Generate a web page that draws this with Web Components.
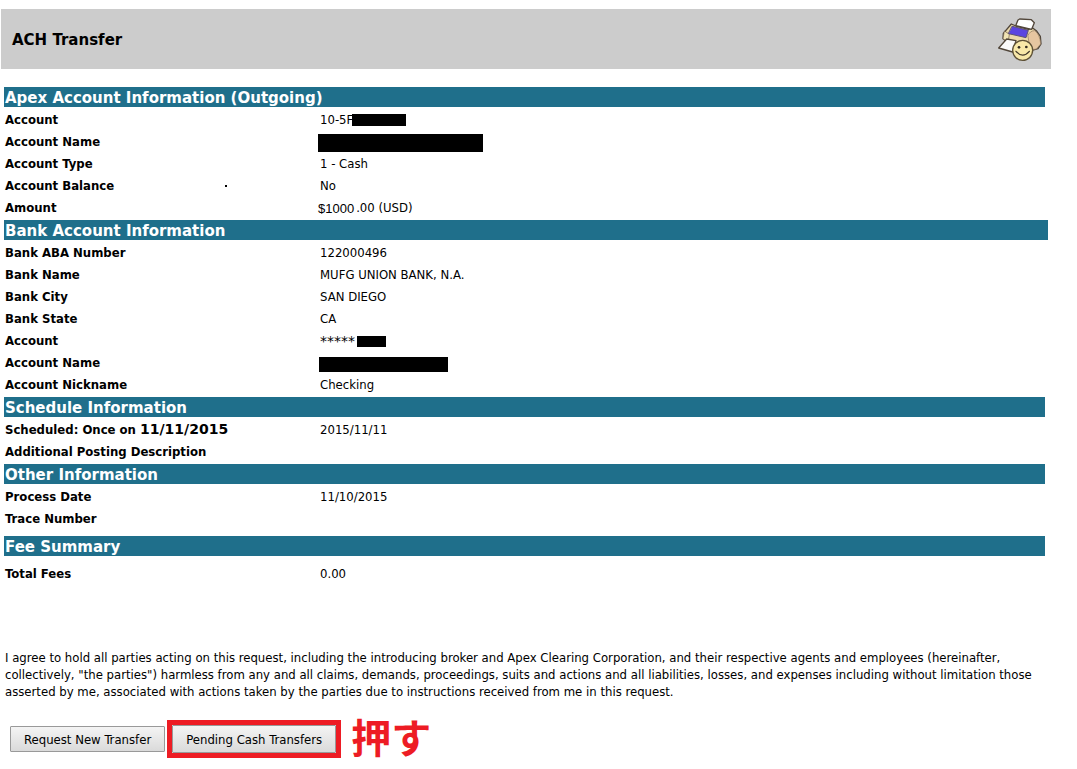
<!DOCTYPE html>
<html lang="en">
<head>
<meta charset="utf-8">
<title>ACH Transfer</title>
<style>
  body { margin: 0; background: #fff; color: #000; font: 13px/17px "DejaVu Sans Condensed", "Noto Sans", sans-serif; }
</style>
</head>
<body>
<transfer-page>
  <page-banner>ACH Transfer</page-banner>
  <detail-section heading="Apex Account Information (Outgoing)">
    <detail-value label="Account">10-5F<redacted-block size="account"></redacted-block></detail-value>
    <detail-value label="Account Name"><redacted-block size="holder"></redacted-block></detail-value>
    <detail-value label="Account Type">1 - Cash</detail-value>
    <detail-value label="Account Balance" marked>No</detail-value>
    <detail-value label="Amount"><money-figure>$1000</money-figure>.00 (USD)</detail-value>
  </detail-section>
  <detail-section heading="Bank Account Information" wide>
    <detail-value label="Bank ABA Number">122000496</detail-value>
    <detail-value label="Bank Name">MUFG UNION BANK, N.A.</detail-value>
    <detail-value label="Bank City">SAN DIEGO</detail-value>
    <detail-value label="Bank State">CA</detail-value>
    <detail-value label="Account"><masked-digits>*****</masked-digits><redacted-block size="digits"></redacted-block></detail-value>
    <detail-value label="Account Name"><redacted-block size="owner"></redacted-block></detail-value>
    <detail-value label="Account Nickname">Checking</detail-value>
  </detail-section>
  <detail-section heading="Schedule Information">
    <detail-value label="Scheduled: Once on " date="11/11/2015">2015/11/11</detail-value>
    <detail-value label="Additional Posting Description"></detail-value>
  </detail-section>
  <detail-section heading="Other Information">
    <detail-value label="Process Date">11/10/2015</detail-value>
    <detail-value label="Trace Number"></detail-value>
  </detail-section>
  <detail-section heading="Fee Summary" spaced>
    <detail-value label="Total Fees">0.00</detail-value>
  </detail-section>
  <agreement-text>I agree to hold all parties acting on this request, including the introducing broker and Apex Clearing Corporation, and their respective agents and employees (hereinafter, collectively, "the parties") harmless from any and all claims, demands, proceedings, suits and actions and all liabilities, losses, and expenses including without limitation those asserted by me, associated with actions taken by the parties due to instructions received from me in this request.</agreement-text>
  <action-bar>
    <action-button>Request New Transfer</action-button>
    <action-button highlighted>Pending Cash Transfers</action-button>
    <press-note lang="ja">押す</press-note>
  </action-bar>
</transfer-page>
<script>
  const define = (name, markup, setup) => {
    const template = document.createElement('template');
    template.innerHTML = markup;
    customElements.define(name, class extends HTMLElement {
      constructor() {
        super();
        this.attachShadow({ mode: 'open' }).append(template.content.cloneNode(true));
      }
      connectedCallback() {
        if (setup && !this.ready) { this.ready = true; setup(this, this.shadowRoot); }
      }
    });
  };

  define('transfer-page', `
    <style>:host { display: block; padding: 9px 26px 10px 1px; } main { display: block; }</style>
    <main><slot></slot></main>`);

  define('page-banner', `
    <style>
      :host { display: block; margin-bottom: 18px; }
      header { display: flex; align-items: center; justify-content: space-between; height: 60px; padding: 0 7px 0 11px; background: #ccc; }
      h1 { margin: 0; padding-top: 2px; font: bold 15px/20px "DejaVu Sans", sans-serif; }
      svg { display: block; width: 48px; height: 48px; }
    </style>
    <header>
      <h1><slot></slot></h1>
      <svg viewBox="48 45 144 144" role="img" aria-label="Print" stroke-linejoin="round" stroke-linecap="round">
        <path d="M70 100 L94 72 L108 78 L145 88 L158 84 L169 92 L181 109 L183 132 L174 146 L156 151 L104 148 L82 126 L69 116Z" fill="#ead9aa" stroke="#51463a" stroke-width="4"/>
        <path d="M73 94 L69 116 L84 126 L88 104Z" fill="#f1e4b5" stroke="#6b5b49" stroke-width="2"/>
        <path d="M144 106 Q150 92 164 92 Q180 103 182 132 L169 147 L152 150Z" fill="#e6c6a0" stroke="#8b745c" stroke-width="2"/>
        <path d="M107 77 L114 60 L119 57 L154 59 L163 68 L155 88Z" fill="#fff" stroke="#51463a" stroke-width="4"/>
        <path d="M97 79 L145 91 L138 113 L86 101Z" fill="#5a45e0" stroke="#5d5273" stroke-width="3"/>
        <path d="M80 117 L108 122 L98 156 L56 144Z" fill="#fafafa" stroke="#51463a" stroke-width="4"/>
        <circle cx="128" cy="151" r="30" fill="#f8e8a8" stroke="#5e5136" stroke-width="4"/>
        <g fill="#332b20"><circle cx="117" cy="142" r="4"/><circle cx="139" cy="141" r="4"/></g>
        <path d="M108 154 Q128 177 148 154" fill="none" stroke="#43392b" stroke-width="4"/>
      </svg>
    </header>`);

  define('detail-section', `
    <style>
      :host { display: block; margin: 0 6px 0 3px; }
      :host([wide]) { margin-right: 3px; }
      :host([spaced]) { margin-top: 6px; }
      h2 { margin: 0; padding: 2px 1px 0; background: #1f6f8b; color: #fff; font: bold 15px/18px "DejaVu Sans", sans-serif; }
      table { width: 100%; margin: 2px 0 1px; border-collapse: collapse; table-layout: fixed; }
      :host([spaced]) table { margin-top: 7px; }
      th, td { height: 22px; padding: 0 1px; text-align: left; vertical-align: middle; font-size: 13px; line-height: 22px; }
      th { width: 313px; font-weight: bold; }
      .marked { display: flex; align-items: center; }
      .marked span { width: 220px; }
      .marked i { width: 2px; height: 2px; background: #000; }
      time { font: bold 14px/20px "DejaVu Sans", sans-serif; }
    </style>
    <section><h2></h2><table><tbody></tbody></table></section>`,
    (host, root) => {
      root.querySelector('h2').textContent = host.getAttribute('heading');
      const body = root.querySelector('tbody');
      [...host.children].forEach((item, index) => {
        item.slot = 'value-' + index;
        const label = item.getAttribute('label');
        const row = document.createElement('tr');
        row.innerHTML = '<th scope="row"></th><td><slot name="value-' + index + '"></slot></td>';
        const head = row.querySelector('th');
        if (item.hasAttribute('marked')) {
          head.innerHTML = '<div class="marked"><span></span><i></i></div>';
          head.querySelector('span').textContent = label;
        } else head.textContent = label;
        if (item.hasAttribute('date')) {
          const time = document.createElement('time');
          time.textContent = item.getAttribute('date');
          head.append(time);
        }
        body.append(row);
      });
    });

  define('detail-value', `
    <style>:host { display: flex; align-items: center; height: 22px; }</style><slot></slot>`);

  define('redacted-block', `
    <style>
      :host { display: block; background: #000; width: 54px; height: 12px; }
      :host([size="account"]) { margin-left: -1px; }
      :host([size="holder"]) { width: 165px; height: 18px; margin: 2px 0 0 -2px; }
      :host([size="owner"]) { width: 129px; height: 15px; margin: 2px 0 0 -1px; }
      :host([size="digits"]) { width: 29px; height: 11px; }
    </style>`);

  define('masked-digits', `
    <style>:host { display: block; margin-right: 2px; font: 14px/18px "DejaVu Sans", sans-serif; }</style><slot></slot>`);

  define('money-figure', `
    <style>:host { display: block; margin: 0 2px 0 -2px; font: 13px/17px "Liberation Sans", sans-serif; }</style><slot></slot>`);

  define('agreement-text', `
    <style>:host { display: block; margin: 64px 6px 0 4px; } p { margin: 0; line-height: 17px; }</style>
    <p><slot></slot></p>`);

  define('action-bar', `
    <style>:host { display: flex; align-items: center; height: 38px; margin: 20px 0 0 9px; }</style>
    <slot></slot>`);

  define('action-button', `
    <style>
      :host { display: block; }
      :host([highlighted]) { margin-left: 2px; border: 5px solid #ed1c24; }
      button { display: block; height: 26px; padding: 0 13px; border: 1px solid #999; border-radius: 1px; background: linear-gradient(#f4f4f4, #dadada); color: #000; font: inherit; white-space: nowrap; }
      :host([highlighted]) button { height: 28px; }
    </style>
    <button type="button"><slot></slot></button>`);

  define('press-note', `
    <style>:host { display: block; margin-left: 10px; padding-bottom: 6px; color: #ed1c24; font: bold 40px/38px "Noto Sans CJK JP", sans-serif; }</style>
    <slot></slot>`);
</script>
</body>
</html>
